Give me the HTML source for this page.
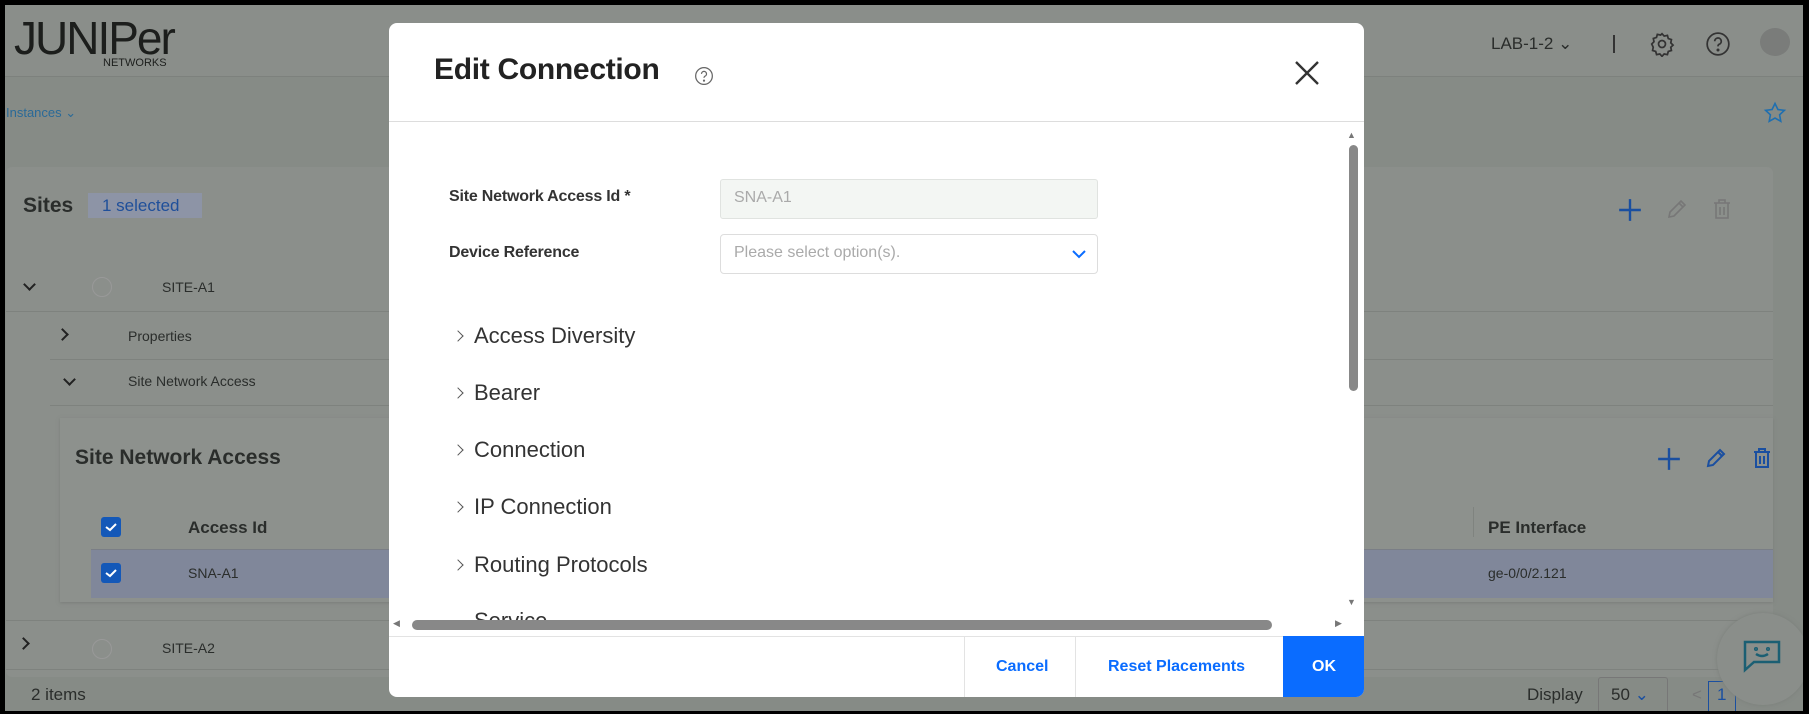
<!DOCTYPE html>
<html><head><meta charset="utf-8"><style>
*{box-sizing:border-box;margin:0;padding:0}
body{width:1809px;height:714px;overflow:hidden;background:#000;font-family:"Liberation Sans",sans-serif;position:relative}
.page{position:absolute;left:5px;top:5px;width:1798px;height:706px;background:#868b86;overflow:hidden}
.abs{position:absolute}
.hdr{left:0;top:0;width:100%;height:72px;background:#8a8e8a;border-bottom:1px solid #7d817d}
.t{position:absolute;white-space:nowrap;color:#2a2d2b}
.panel{background:#8b8f8b}
.sep{position:absolute;height:1px;background:#7e827e}
.modal{position:absolute;left:389px;top:23px;width:975px;height:674px;background:#fff;border-radius:8px;overflow:hidden}
.m{position:absolute;white-space:nowrap}
.sec{position:absolute;left:85px;font-size:22px;color:#333}
.sec:before{content:"";position:absolute;left:-20px;top:9px;width:7px;height:7px;border-right:1.5px solid #555;border-top:1.5px solid #555;transform:rotate(45deg)}
.chev{position:absolute;width:9px;height:9px;border-right:2px solid #222;border-bottom:2px solid #222}
</style></head><body>
<div style="position:absolute;left:5px;top:5px;width:1798px;height:2px;background:#fff"></div>
<div class="page">
 <div class="abs hdr"></div>
 <div class="t" style="left:9px;top:6px;font-size:46px;letter-spacing:-2px;color:#1c1e1c">JUNIPer</div>
 <div class="t" style="left:98px;top:52px;font-size:11px;color:#1c1e1c">NETWORKS</div>
 <div class="t" style="left:1486px;top:29px;font-size:17px">LAB-1-2 ⌄</div>
 <div class="abs" style="left:1608px;top:30px;width:2px;height:18px;background:#333"></div>
 <svg class="abs" style="left:1644px;top:26px" width="26" height="26" viewBox="0 0 24 24" fill="none" stroke="#333" stroke-width="1.6"><circle cx="12" cy="12" r="3.2"/><path d="M12 2.5l2 2.2 3-.6.8 2.9 2.9.9-.6 3 2.1 2.1-2.1 2 .6 3-2.9.9-.8 2.9-3-.6-2 2.2-2-2.2-3 .6-.8-2.9-2.9-.9.6-3L2.5 12l2.1-2.1-.6-3 2.9-.9.8-2.9 3 .6z"/></svg>
 <svg class="abs" style="left:1700px;top:26px" width="26" height="26" viewBox="0 0 24 24" fill="none" stroke="#333" stroke-width="1.6"><circle cx="12" cy="12" r="10"/><path d="M9 9.5a3 3 0 1 1 4 2.8c-.8.4-1 1-1 1.9"/><circle cx="12" cy="17.5" r=".6" fill="#333"/></svg>
 <div class="abs" style="left:1755px;top:23px;width:30px;height:28px;border-radius:50%;background:#7a7c7a"></div>
 <div class="t" style="left:1px;top:100px;font-size:13px;color:#2a6a98">Instances ⌄</div>
 <svg class="abs" style="left:1758px;top:96px" width="24" height="24" viewBox="0 0 24 24" fill="none" stroke="#1f6fb0" stroke-width="1.6"><path d="M12 2.5l2.9 6 6.5.8-4.8 4.5 1.2 6.5L12 17.1 6.2 20.3l1.2-6.5L2.6 9.3l6.5-.8z"/></svg>

 <div class="abs panel" style="left:1px;top:162px;width:1767px;height:510px;border-radius:6px"></div>
 <div class="t" style="left:18px;top:189px;font-size:21px;font-weight:bold">Sites</div>
 <div class="abs" style="left:83px;top:188px;width:114px;height:25px;background:#8d94a6"></div>
 <div class="t" style="left:97px;top:191px;font-size:17px;color:#1f4f9a">1 selected</div>
 <svg class="abs" style="left:1612px;top:192px" width="26" height="26" viewBox="0 0 24 24" stroke="#1a4fa0" stroke-width="2.2"><path d="M12 2v20M2 12h20"/></svg>
 <svg class="abs" style="left:1660px;top:192px" width="24" height="24" viewBox="0 0 24 24" fill="none" stroke="#777" stroke-width="1.6"><path d="M4 20l1-5L16 4l4 4L9 19zM14 6l4 4"/></svg>
 <svg class="abs" style="left:1706px;top:192px" width="22" height="24" viewBox="0 0 22 24" fill="none" stroke="#777" stroke-width="1.6"><path d="M3 6h16M8 6V3h6v3M5 6v15h12V6M9 10v8M13 10v8"/></svg>

 <div class="chev" style="left:20px;top:275px;transform:rotate(45deg)"></div>
 <div class="abs" style="left:87px;top:272px;width:20px;height:20px;border-radius:50%;border:1px solid #999"></div>
 <div class="t" style="left:157px;top:274px;font-size:14px">SITE-A1</div>
 <div class="sep" style="left:1px;top:306px;width:1767px"></div>
 <div class="chev" style="left:53px;top:325px;transform:rotate(-45deg)"></div>
 <div class="t" style="left:123px;top:323px;font-size:14px">Properties</div>
 <div class="sep" style="left:45px;top:354px;width:1723px"></div>
 <div class="chev" style="left:60px;top:370px;transform:rotate(45deg)"></div>
 <div class="t" style="left:123px;top:368px;font-size:14px">Site Network Access</div>
 <div class="sep" style="left:45px;top:400px;width:1723px"></div>

 <div class="abs" style="left:55px;top:413px;width:1713px;height:184px;background:#8d918d;box-shadow:0 1px 3px #7a7d7a"></div>
 <div class="t" style="left:70px;top:441px;font-size:21px;font-weight:bold">Site Network Access</div>
 <svg class="abs" style="left:1651px;top:441px" width="26" height="26" viewBox="0 0 24 24" stroke="#1a4fa0" stroke-width="2.2"><path d="M12 2v20M2 12h20"/></svg>
 <svg class="abs" style="left:1699px;top:441px" width="24" height="24" viewBox="0 0 24 24" fill="none" stroke="#1a4fa0" stroke-width="2"><path d="M4 20l1-5L16 4l4 4L9 19zM14 6l4 4"/></svg>
 <svg class="abs" style="left:1746px;top:441px" width="22" height="24" viewBox="0 0 22 24" fill="none" stroke="#1a4fa0" stroke-width="2"><path d="M3 6h16M8 6V3h6v3M5 6v15h12V6M9 10v8M13 10v8"/></svg>
 <div class="abs" style="left:96px;top:512px;width:20px;height:20px;background:#1458b8;border-radius:3px"></div>
 <svg class="abs" style="left:96px;top:512px" width="20" height="20" viewBox="0 0 20 20" fill="none" stroke="#fff" stroke-width="2"><path d="M5 10l4 3 6-6"/></svg>
 <div class="t" style="left:183px;top:513px;font-size:17px;font-weight:bold">Access Id</div>
 <div class="abs" style="left:1468px;top:502px;width:1px;height:30px;background:#7f837f"></div>
 <div class="t" style="left:1483px;top:513px;font-size:17px;font-weight:bold">PE Interface</div>
 <div class="abs" style="left:86px;top:544px;width:1682px;height:49px;background:#80879a;border-top:1px solid #7a7e86"></div>
 <div class="abs" style="left:96px;top:558px;width:20px;height:20px;background:#1458b8;border-radius:3px"></div>
 <svg class="abs" style="left:96px;top:558px" width="20" height="20" viewBox="0 0 20 20" fill="none" stroke="#fff" stroke-width="2"><path d="M5 10l4 3 6-6"/></svg>
 <div class="t" style="left:183px;top:560px;font-size:14px">SNA-A1</div>
 <div class="t" style="left:1483px;top:560px;font-size:14px">ge-0/0/2.121</div>
 <div class="sep" style="left:1px;top:615px;width:1767px"></div>
 <div class="chev" style="left:14px;top:634px;transform:rotate(-45deg)"></div>
 <div class="abs" style="left:87px;top:634px;width:20px;height:20px;border-radius:50%;border:1px solid #999"></div>
 <div class="t" style="left:157px;top:635px;font-size:14px">SITE-A2</div>
 <div class="sep" style="left:1px;top:664px;width:1767px"></div>
 <div class="t" style="left:26px;top:680px;font-size:17px">2 items</div>
 <div class="t" style="left:1522px;top:680px;font-size:17px">Display</div>
 <div class="abs" style="left:1593px;top:672px;width:70px;height:36px;border:1px solid #777;border-radius:3px"></div>
 <div class="t" style="left:1606px;top:680px;font-size:17px">50 <span style="color:#1a4fa0">⌄</span></div>
 <div class="t" style="left:1687px;top:680px;font-size:17px;color:#777">&lt;</div>
 <div class="abs" style="left:1703px;top:676px;width:28px;height:34px;border:1px solid #1a4fa0"></div>
 <div class="t" style="left:1712px;top:680px;font-size:17px;color:#1a4fa0">1</div>
 <div class="abs" style="left:1712px;top:608px;width:92px;height:92px;border-radius:50%;background:#8a8e8a;box-shadow:0 0 4px #7a7e7a"></div>
 <svg class="abs" style="left:1737px;top:634px" width="40" height="34" viewBox="0 0 40 34" fill="none" stroke="#1b5f73" stroke-width="2.5"><path d="M3 3h34v20H12l-9 8z"/><path d="M14 15q6 4 12 0"/><circle cx="14" cy="10" r=".8"/><circle cx="26" cy="10" r=".8"/></svg>

 <div class="modal" style="left:384px;top:18px">
  <div class="m" style="left:45px;top:30px;font-size:30px;font-weight:bold;color:#222;letter-spacing:-.3px">Edit Connection</div>
  <svg class="abs" style="left:305px;top:43px" width="20" height="20" viewBox="0 0 24 24" fill="none" stroke="#666" stroke-width="1.5"><circle cx="12" cy="12" r="10"/><path d="M9 9.5a3 3 0 1 1 4 2.8c-.8.4-1 1-1 1.9"/><circle cx="12" cy="17.5" r=".6"/></svg>
  <svg class="abs" style="left:905px;top:37px" width="26" height="26" viewBox="0 0 26 26" stroke="#333" stroke-width="2.4"><path d="M2 2l22 22M24 2L2 24"/></svg>
  <div class="abs" style="left:0;top:98px;width:975px;height:1px;background:#ddd"></div>
  <div class="m" style="left:60px;top:165px;font-size:16px;color:#333;font-weight:bold;letter-spacing:-.2px">Site Network Access Id *</div>
  <div class="abs" style="left:331px;top:156px;width:378px;height:40px;background:#f3f6f3;border:1px solid #e0e3e0;border-radius:3px"></div>
  <div class="m" style="left:345px;top:166px;font-size:16px;color:#aaa">SNA-A1</div>
  <div class="m" style="left:60px;top:221px;font-size:16px;color:#333;font-weight:bold;letter-spacing:-.2px">Device Reference</div>
  <div class="abs" style="left:331px;top:211px;width:378px;height:40px;border:1px solid #ddd;border-radius:4px"></div>
  <div class="m" style="left:345px;top:221px;font-size:16px;color:#aaa">Please select option(s).</div>
  <svg class="abs" style="left:683px;top:226px" width="14" height="10" viewBox="0 0 14 10" fill="none" stroke="#0a6cff" stroke-width="2"><path d="M1 2l6 6 6-6"/></svg>
  <div class="sec" style="top:300px">Access Diversity</div>
  <div class="sec" style="top:357px">Bearer</div>
  <div class="sec" style="top:414px">Connection</div>
  <div class="sec" style="top:471px">IP Connection</div>
  <div class="sec" style="top:529px">Routing Protocols</div>
  <div class="sec" style="top:585px;height:17px;overflow:hidden">Service</div>
  <div class="abs" style="left:0;top:600px;width:975px;height:21px;background:#fff"></div>
  <div class="abs" style="left:958px;top:107px;font-size:9px;color:#777">▲</div>
  <div class="abs" style="left:960px;top:122px;width:9px;height:246px;background:#888;border-radius:5px"></div>
  <div class="abs" style="left:958px;top:574px;font-size:9px;color:#777">▼</div>
  <div class="abs" style="left:4px;top:595px;font-size:9px;color:#777">◀</div>
  <div class="abs" style="left:23px;top:597px;width:860px;height:10px;background:#888;border-radius:5px"></div>
  <div class="abs" style="left:946px;top:595px;font-size:9px;color:#777">▶</div>
  <div class="abs" style="left:0;top:613px;width:975px;height:1px;background:#e3e3e3"></div>
  <div class="abs" style="left:575px;top:613px;width:1px;height:61px;background:#e3e3e3"></div>
  <div class="abs" style="left:686px;top:613px;width:1px;height:61px;background:#e3e3e3"></div>
  <div class="m" style="left:607px;top:635px;font-size:16px;color:#0a6cff;font-weight:bold">Cancel</div>
  <div class="m" style="left:719px;top:635px;font-size:16px;color:#0a6cff;font-weight:bold">Reset Placements</div>
  <div class="abs" style="left:894px;top:613px;width:81px;height:61px;background:#0a6cff"></div>
  <div class="m" style="left:923px;top:635px;font-size:16px;color:#fff;font-weight:bold">OK</div>
 </div>
</div>
</body></html>
